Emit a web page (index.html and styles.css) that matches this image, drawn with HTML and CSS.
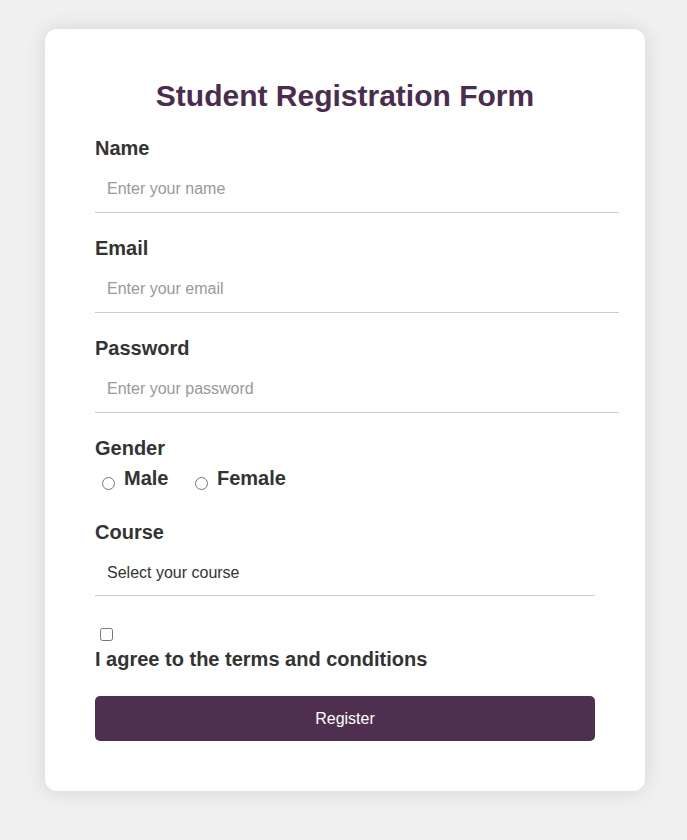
FILE: index.html
```html
<!DOCTYPE html>
<html lang="en">
<head>
<meta charset="utf-8">
<title>Student Registration Form</title>
<link rel="stylesheet" href="styles.css">
</head>
<body>
<div class="card">
  <h2 class="title">Student Registration Form</h2>
  <form class="form">
    <div class="field">
      <label class="field-label" for="name">Name</label>
      <input class="text-input" type="text" id="name" placeholder="Enter your name">
    </div>
    <div class="field">
      <label class="field-label" for="email">Email</label>
      <input class="text-input" type="email" id="email" placeholder="Enter your email">
    </div>
    <div class="field">
      <label class="field-label" for="password">Password</label>
      <input class="text-input" type="password" id="password" placeholder="Enter your password">
    </div>
    <div class="field field-gender">
      <label class="field-label">Gender</label>
      <div class="radio-row">
        <input class="radio" type="radio" id="male" name="gender">
        <label class="option-label" for="male">Male</label>
        <input class="radio" type="radio" id="female" name="gender">
        <label class="option-label" for="female">Female</label>
      </div>
    </div>
    <div class="field field-course">
      <label class="field-label" for="course">Course</label>
      <select class="select" id="course">
        <option>Select your course</option>
        <option>Computer Science</option>
        <option>Mathematics</option>
        <option>Physics</option>
      </select>
    </div>
    <div class="field field-terms">
      <input class="checkbox" type="checkbox" id="terms">
      <label class="field-label terms-label" for="terms">I agree to the terms and conditions</label>
    </div>
    <button class="btn" type="button">Register</button>
  </form>
</div>
</body>
</html>
```
FILE: styles.css
```css
* {
  box-sizing: border-box;
}

html, body {
  margin: 0;
  background: #f0f0f0;
}

body {
  font-family: "Liberation Sans", Arial, sans-serif;
  font-size: 16px;
  color: #333;
  padding: 29px 0 40px 3px;
}

.card {
  width: 600px;
  margin: 0 auto;
  background: #fff;
  border-radius: 12px;
  box-shadow: 0 0 20px rgba(0, 0, 0, 0.12);
  padding: 50px 50px 50px;
}

.title {
  margin: 0 0 24px;
  text-align: center;
  font-size: 30px;
  font-weight: bold;
  color: #4a2c4e;
}

.field {
  margin-bottom: 24px;
}

.field-label {
  display: block;
  font-size: 20px;
  font-weight: bold;
  color: #333;
  margin-bottom: 6px;
}

.text-input {
  box-sizing: content-box;
  display: block;
  width: 100%;
  padding: 14px 12px;
  border: none;
  border-bottom: 1px solid #ccc;
  font-family: inherit;
  font-size: 16px;
  color: #333;
  background: #fff;
  outline: none;
  margin: 0;
}

.text-input::placeholder {
  color: #999;
}

.field-gender {
  margin-bottom: 31px;
}

.radio-row {
  display: flex;
  align-items: center;
}

.radio {
  width: 13px;
  height: 13px;
  margin: 11px 9px 0 7px;
}

.option-label {
  font-size: 20px;
  font-weight: bold;
  color: #333;
  margin-right: 19.5px;
}

.select {
  appearance: none;
  -webkit-appearance: none;
  display: block;
  width: 100%;
  padding: 14px 12px;
  border: none;
  border-bottom: 1px solid #ccc;
  border-radius: 0;
  font-family: inherit;
  font-size: 16px;
  color: #333;
  background: #fff;
  outline: none;
  margin: 0;
}

.field-course {
  margin-bottom: 29px;
}

.field-terms {
  margin-bottom: 25px;
}

.checkbox {
  width: 13px;
  height: 13px;
  margin: 3px 3px 3px 5px;
}

.terms-label {
  margin: 3px 0 0;
}

.btn {
  display: block;
  width: 100%;
  padding: 13.5px;
  border: none;
  border-radius: 5px;
  background: #4e2f50;
  color: #fff;
  font-family: inherit;
  font-size: 16px;
  cursor: pointer;
}
```
